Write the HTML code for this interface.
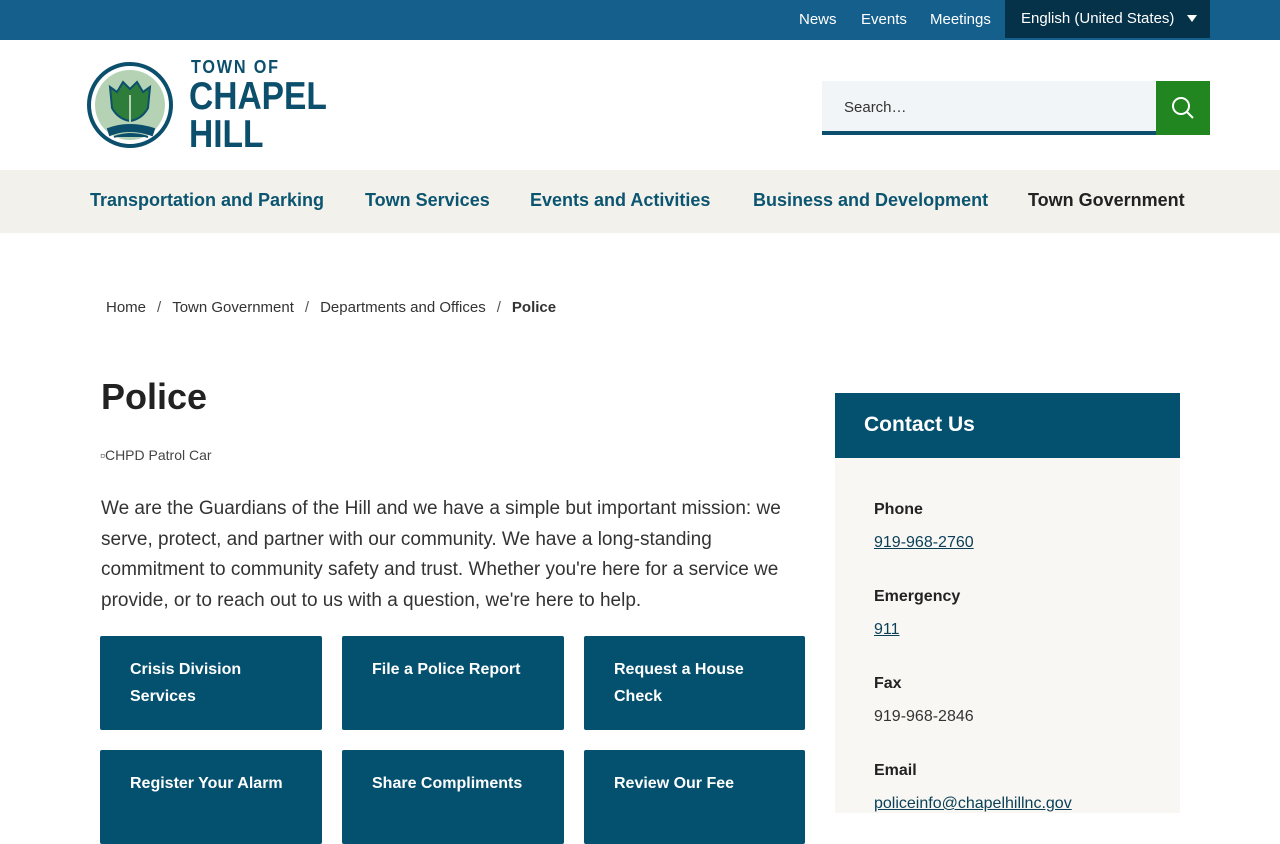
<!DOCTYPE html>
<html><head><meta charset="utf-8"><style>
*{box-sizing:border-box;margin:0;padding:0}
body{width:1280px;height:800px;overflow:hidden;font-family:"Liberation Sans",sans-serif;background:#fff;color:#222}
.top{height:40px;background:#155f8c;position:relative}
.top a{position:absolute;top:11px;color:#fff;font-size:15px}
.lang{position:absolute;left:1005px;top:0;width:205px;height:38px;background:#053249;color:#fff;font-size:15px;padding:10px 0 0 16px}
.lang:after{content:"";position:absolute;right:13px;top:15px;border:5px solid transparent;border-top:7px solid #fff;border-bottom:0}
.search{position:absolute;left:822px;top:81px;width:335px;height:54px;background:#f1f5f8;border-bottom:4px solid #0b4f6c;font-size:15px;padding:18px 22px;color:#333}
.sbtn{position:absolute;left:1156px;top:81px;width:54px;height:54px;background:#21861f}
.nav{position:absolute;top:170px;left:0;width:1280px;height:63px;background:#f3f1ec}
.nav span{position:absolute;top:20px;font-size:18px;font-weight:bold;color:#0b5570;white-space:nowrap}
.crumb{position:absolute;top:299px;left:106px;font-size:15px;color:#333}
.crumb i{font-style:normal;margin:0 11px;color:#555}
h1{position:absolute;left:101px;top:376px;font-size:36px;font-weight:bold;color:#222}
.img{position:absolute;left:100px;top:447px;font-size:14px;color:#444}
.p{position:absolute;left:101px;top:494px;width:700px;font-size:19px;line-height:30.5px;color:#333}
.btn{position:absolute;width:222px;height:94px;background:#04506f;color:#fff;font-size:16px;font-weight:bold;padding:20px 30px;line-height:27px;border-radius:2px}
.side{position:absolute;left:835px;top:393px;width:345px;height:420px;background:#f8f7f3}
.sh{height:65px;background:#04506f;color:#fff;font-size:21px;font-weight:bold;padding:20px 29px}
.lab{position:absolute;left:39px;font-size:16px;font-weight:bold;color:#222}
.val{position:absolute;left:39px;font-size:16px;color:#0b4058}
</style></head><body>
<div class="top">
<a style="left:799px">News</a><a style="left:861px">Events</a><a style="left:930px">Meetings</a>
<div class="lang">English (United States)</div></div>
<svg style="position:absolute;left:86px;top:61px" width="90" height="90" viewBox="0 0 90 90">
<circle cx="44" cy="44" r="41" fill="#fff" stroke="#0b4f6c" stroke-width="4"/>
<circle cx="44" cy="44" r="35" fill="#b5d3b4"/>
<path d="M24 26 L31 31 L37 21 L44 28 L51 21 L57 31 L64 26 L62 47 Q56 58 44 60 Q32 58 26 47Z" fill="#2f7d3a" stroke="#0b4f6c" stroke-width="2"/>
<path d="M44 34 V70" stroke="#b5d3b4" stroke-width="2"/>
<path d="M22 68 Q44 60 68 68 L66 74 Q44 66 24 74Z M28 76 Q44 70 62 76" fill="#0b4f6c" stroke="#0b4f6c" stroke-width="2"/>
</svg>
<div style="position:absolute;left:191px;top:57px;color:#0b4f6c;font-weight:bold;font-size:18px;letter-spacing:2px;transform:scaleX(.9);transform-origin:left">TOWN OF</div>
<div style="position:absolute;left:189px;top:78px;color:#0b4f6c;font-weight:bold;font-size:39px;line-height:38px;transform:scaleX(.86);transform-origin:left">CHAPEL<br>HILL</div>
<div class="search">Search…</div>
<div class="sbtn"><svg width="54" height="54"><circle cx="25" cy="25" r="8" fill="none" stroke="#fff" stroke-width="2"/><path d="M31 31 L37 37" stroke="#fff" stroke-width="2"/></svg></div>
<div class="nav"><span style="left:90px">Transportation and Parking</span><span style="left:365px">Town Services</span><span style="left:530px">Events and Activities</span><span style="left:753px">Business and Development</span><span style="left:1028px;color:#222">Town Government</span></div>
<div class="crumb">Home<i>/</i>Town Government<i>/</i>Departments and Offices<i>/</i><b>Police</b></div>
<h1>Police</h1>
<div class="img">▫CHPD Patrol Car</div>
<div class="p">We are the Guardians of the Hill and we have a simple but important mission: we serve, protect, and partner with our community. We have a long-standing commitment to community safety and trust. Whether you're here for a service we provide, or to reach out to us with a question, we're here to help.</div>
<div class="btn" style="left:100px;top:636px">Crisis Division Services</div>
<div class="btn" style="left:342px;top:636px">File a Police Report</div>
<div class="btn" style="left:584px;top:636px;width:221px">Request a House Check</div>
<div class="btn" style="left:100px;top:750px;white-space:nowrap">Register Your Alarm</div>
<div class="btn" style="left:342px;top:750px">Share Compliments</div>
<div class="btn" style="left:584px;top:750px;width:221px">Review Our Fee</div>
<div class="side"><div class="sh">Contact Us</div>
<div class="lab" style="top:108px">Phone</div><div class="val" style="top:141px;text-decoration:underline">919-968-2760</div>
<div class="lab" style="top:195px">Emergency</div><div class="val" style="top:228px;text-decoration:underline">911</div>
<div class="lab" style="top:282px">Fax</div><div class="val" style="top:315px;color:#333">919-968-2846</div>
<div class="lab" style="top:369px">Email</div><div class="val" style="top:402px;text-decoration:underline">policeinfo@chapelhillnc.gov</div>
</div>
</body></html>
